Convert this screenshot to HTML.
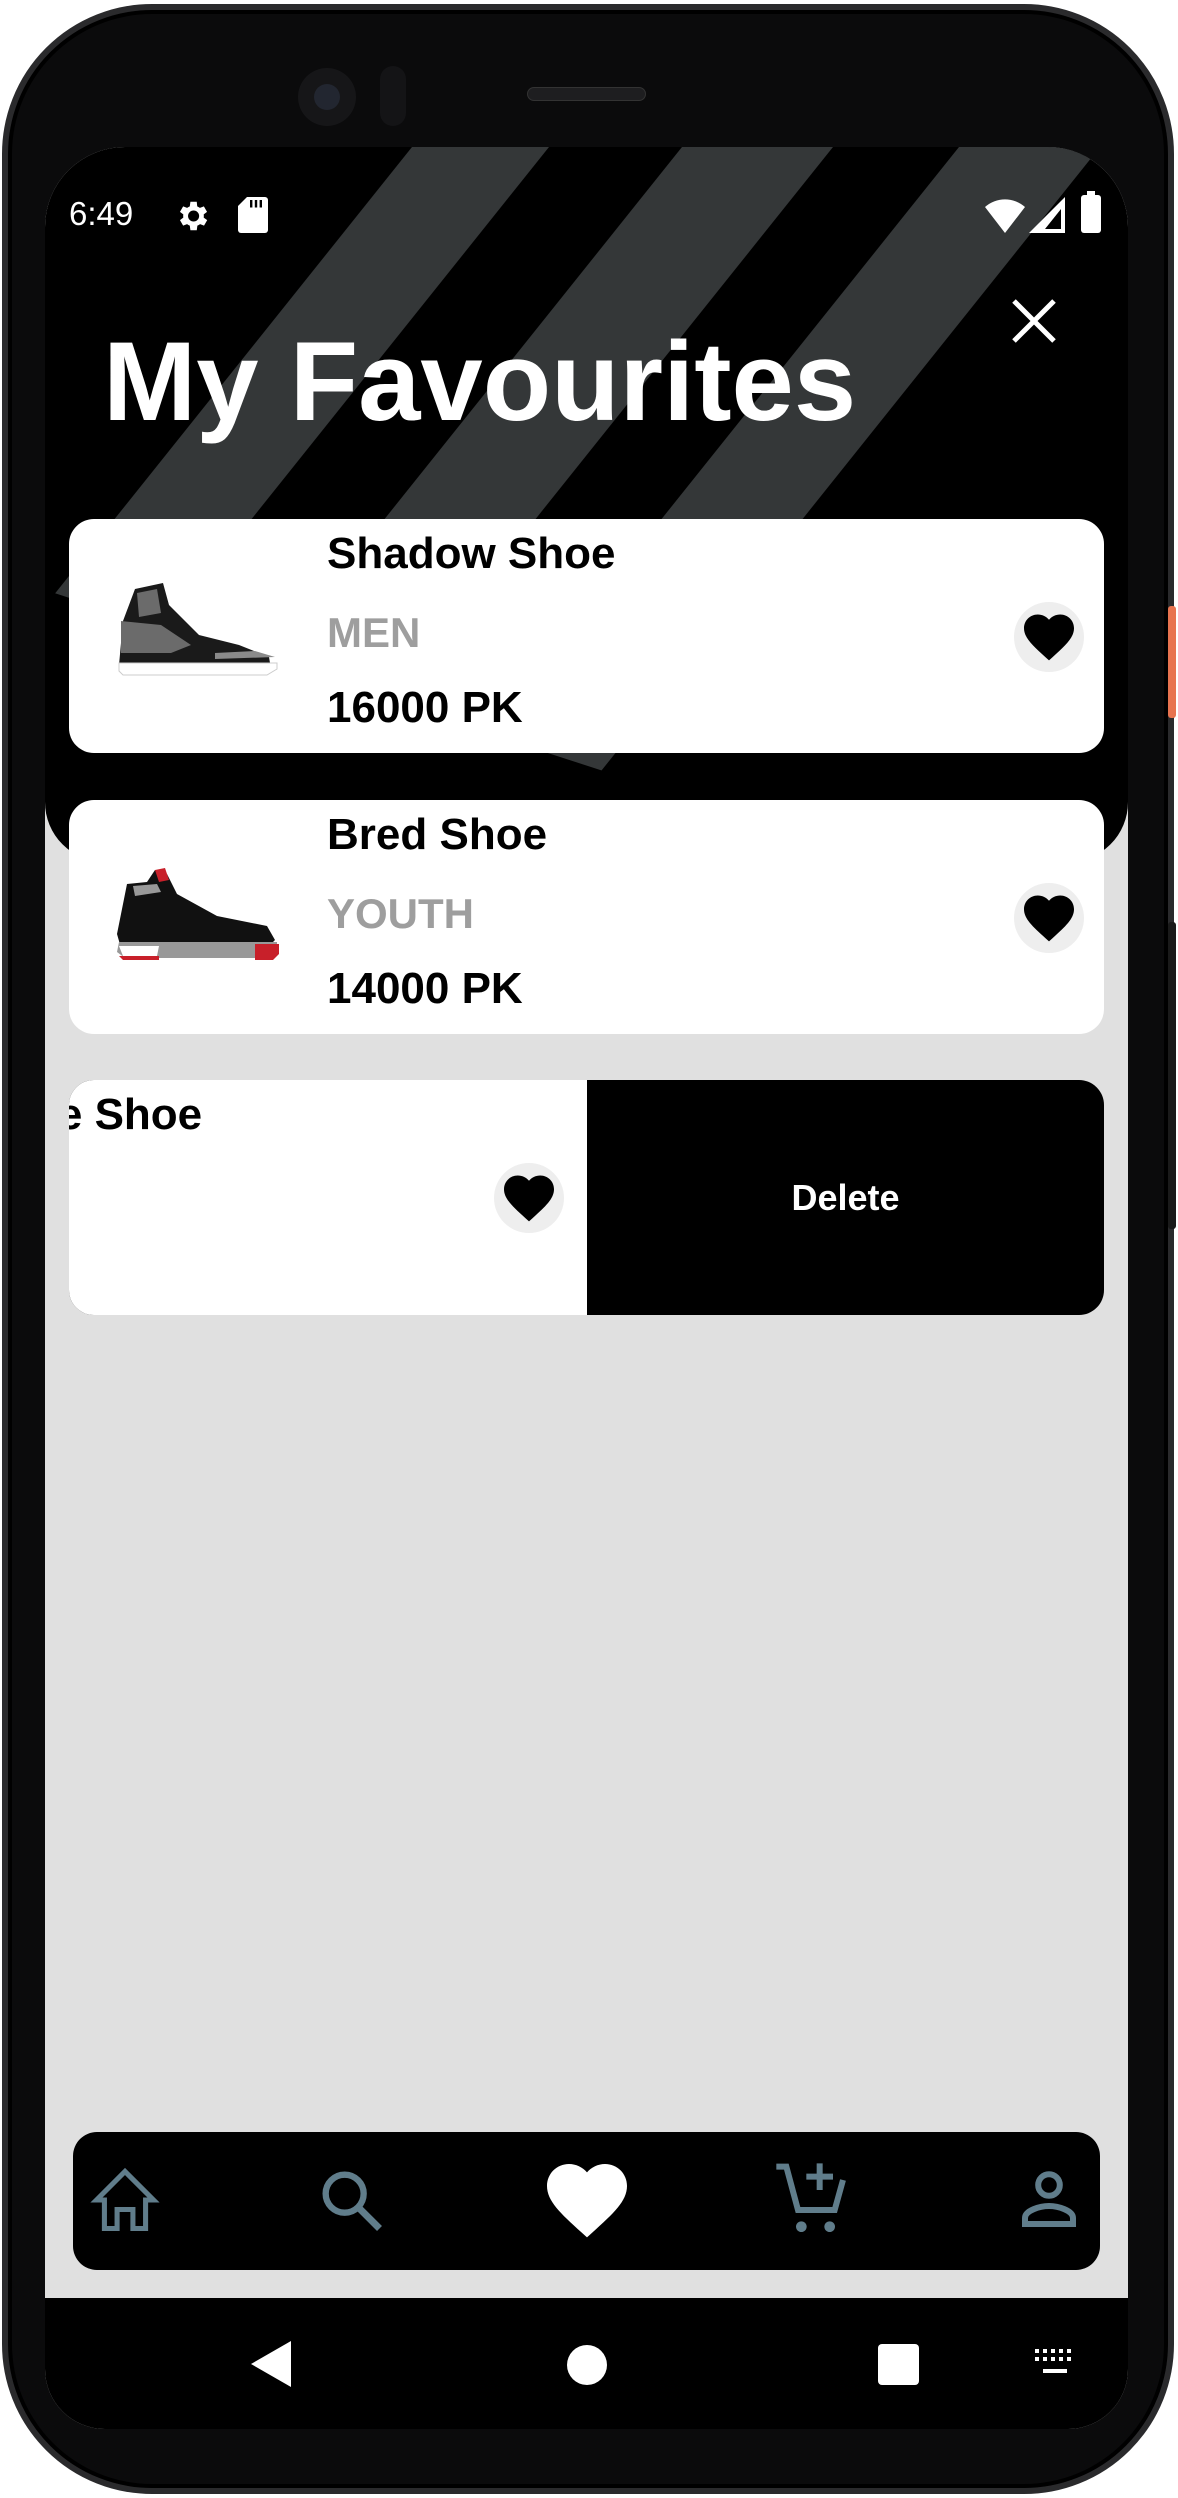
<!DOCTYPE html>
<html><head><meta charset="utf-8"><style>
*{margin:0;padding:0;box-sizing:border-box}
body{width:1178px;height:2498px;background:#fff;position:relative;overflow:hidden;font-family:"Liberation Sans",sans-serif}
.abs{position:absolute}
.phone{left:2px;top:4px;width:1172px;height:2490px;border-radius:150px;background:#0b0b0c;border:6px solid #2a2a2c;box-shadow:inset 0 0 0 4px #000}
.screen{left:45px;top:147px;width:1083px;height:2282px;border-radius:80px 80px 60px 60px;background:#e0e0e0;overflow:hidden}
.card{background:#fff;border-radius:25px}
.name{font-weight:bold;font-size:44px;color:#000}
.cat{font-weight:bold;font-size:42px;color:#9e9e9e}
.price{font-weight:bold;font-size:44px;color:#000}
.hb{width:70px;height:70px;border-radius:35px;background:#eee;display:flex;align-items:center;justify-content:center}
</style></head><body>
<div class="abs phone"></div>
<div class="abs" style="left:298px;top:68px;width:58px;height:58px;border-radius:50%;background:#161618"></div>
<div class="abs" style="left:314px;top:84px;width:26px;height:26px;border-radius:50%;background:#222630"></div>
<div class="abs" style="left:380px;top:66px;width:26px;height:60px;border-radius:13px;background:#141416"></div>
<div class="abs" style="left:527px;top:87px;width:119px;height:14px;border-radius:7px;background:#1e1e20;border:1px solid #333"></div>
<div class="abs" style="left:1168px;top:606px;width:8px;height:112px;border-radius:3px;background:#e8734f"></div>
<div class="abs" style="left:1168px;top:922px;width:8px;height:307px;border-radius:3px;background:#1a1a1a"></div>

<div class="abs screen">
  <div class="abs" style="left:0;top:0;width:1083px;height:715px;background:#000;border-radius:0 0 60px 60px;overflow:hidden">
    <svg width="1083" height="715" style="position:absolute;left:0;top:0">
      <defs><clipPath id="c"><polygon points="0,-10 1200,-10 1200,832 0,443"/></clipPath></defs>
      <g fill="#343738" transform="translate(-45,-147)">
        <g clip-path="url(#c)" transform="translate(45,147)"><g transform="translate(-45,-147)">
        <polygon points="412,147 549,147 -133,1000 -270,1000"/>
        <polygon points="682,147 833,147 151,1000 0,1000"/>
        <polygon points="959,147 1100,147 418,1000 277,1000"/>
        </g></g>
      </g>
    </svg>
  </div>
  <div class="abs" style="left:24px;top:48px;color:#fff;font-size:33px">6:49</div>
  <svg class="abs" style="left:128px;top:50px" width="38" height="38" viewBox="0 0 24 24"><path fill="#fff" d="M19.4 13a7.5 7.5 0 000-2l2.1-1.6-2-3.5-2.5 1a7 7 0 00-1.7-1L15 3h-4l-.4 2.9a7 7 0 00-1.7 1l-2.5-1-2 3.5L6.5 11a7.5 7.5 0 000 2l-2.1 1.6 2 3.5 2.5-1a7 7 0 001.7 1L11 21h4l.4-2.9a7 7 0 001.7-1l2.5 1 2-3.5zM13 15.5A3.5 3.5 0 1113 8.5a3.5 3.5 0 010 7z"/></svg>
  <svg class="abs" style="left:193px;top:50px" width="30" height="36" viewBox="0 0 10 12"><path fill="#fff" d="M3 0h6a1 1 0 011 1v10a1 1 0 01-1 1H1a1 1 0 01-1-1V3z"/><path fill="#000" d="M4 1h.8v2.5H4zM5.6 1h.8v2.5h-.8zM7.2 1H8v2.5h-.8z"/></svg>
  <svg class="abs" style="left:940px;top:50px" width="40" height="36" viewBox="0 0 20 18"><path fill="#fff" d="M10 18L0 5a15 15 0 0120 0z"/></svg>
  <svg class="abs" style="left:984px;top:50px" width="36" height="36" viewBox="0 0 18 18"><path fill="#fff" d="M18 0v18H0z"/><path fill="#000" d="M16 6v10H8z"/></svg>
  <div class="abs" style="left:1036px;top:48px;width:20px;height:38px;background:#fff;border-radius:3px"></div>
  <div class="abs" style="left:1042px;top:44px;width:8px;height:5px;background:#fff"></div>
  <svg class="abs" style="left:965px;top:150px" width="48" height="48" viewBox="0 0 48 48"><path d="M4 4L44 44M44 4L4 44" stroke="#fff" stroke-width="5"/></svg>
  <div class="abs" style="left:58px;top:170px;color:#fff;font-weight:bold;font-size:112px;line-height:130px;white-space:nowrap">My Favourites</div>

  <div class="abs card" style="left:24px;top:372px;width:1035px;height:234px">
    <svg class="abs" style="left:46px;top:62px" width="166" height="100" viewBox="0 0 166 100">
      <path d="M20 8l28-6 6 22 30 30 40 10 30 12 2 12-12 4H8l-4-8 4-44z" fill="#1a1a1a"/>
      <path d="M6 40l40 4 30 20-20 8H6z" fill="#6b6b6b"/>
      <path d="M22 12l20-4 4 24-22 4z" fill="#6b6b6b"/>
      <path d="M100 72l40-2 20 6-60 2z" fill="#8a8a8a"/>
      <path d="M4 82h158v6l-10 6H8l-4-4z" fill="#fff" stroke="#ccc"/>
    </svg>
    <div class="abs name" style="left:258px;top:10px">Shadow Shoe</div>
    <div class="abs cat" style="left:258px;top:90px">MEN</div>
    <div class="abs price" style="left:258px;top:164px">16000 PK</div>
    <div class="abs hb" style="left:945px;top:83px"><svg width="60" height="60" viewBox="0 0 24 24"><path d="M12 21.35l-1.45-1.32C5.4 15.36 2 12.28 2 8.5 2 5.42 4.42 3 7.5 3c1.74 0 3.41.81 4.5 2.09C13.09 3.81 14.76 3 16.5 3 19.58 3 22 5.42 22 8.5c0 3.78-3.4 6.86-8.55 11.54L12 21.35z"/></svg></div>
  </div>
  <div class="abs card" style="left:24px;top:653px;width:1035px;height:234px">
    <svg class="abs" style="left:46px;top:66px" width="166" height="100" viewBox="0 0 166 100">
      <path d="M12 18l20-2 8-12 12 4 10 20 40 22 50 10 8 14-8 8H6l-4-14z" fill="#111"/>
      <path d="M40 4l10-2 4 12-10 2z" fill="#c8202a"/>
      <path d="M18 20l24-2 4 8-26 4z" fill="#999"/>
      <path d="M4 76h158v8l-6 8H10l-8-6z" fill="#999"/>
      <path d="M4 80h40l-2 10H8z" fill="#fff"/>
      <path d="M4 90h40v4H8z" fill="#c8202a"/>
      <path d="M140 78h24v10l-6 6h-18z" fill="#c8202a"/>
    </svg>
    <div class="abs name" style="left:258px;top:10px">Bred Shoe</div>
    <div class="abs cat" style="left:258px;top:90px">YOUTH</div>
    <div class="abs price" style="left:258px;top:164px">14000 PK</div>
    <div class="abs hb" style="left:945px;top:83px"><svg width="60" height="60" viewBox="0 0 24 24"><path d="M12 21.35l-1.45-1.32C5.4 15.36 2 12.28 2 8.5 2 5.42 4.42 3 7.5 3c1.74 0 3.41.81 4.5 2.09C13.09 3.81 14.76 3 16.5 3 19.58 3 22 5.42 22 8.5c0 3.78-3.4 6.86-8.55 11.54L12 21.35z"/></svg></div>
  </div>
  <div class="abs" style="left:24px;top:933px;width:1035px;height:235px;border-radius:25px;overflow:hidden;background:#000">
    <div class="abs" style="left:0;top:0;width:518px;height:235px;background:#fff;overflow:hidden">
      <div class="abs name" style="left:-82px;top:10px;white-space:nowrap">Blue Shoe</div>
      <div class="abs hb" style="left:425px;top:83px"><svg width="60" height="60" viewBox="0 0 24 24"><path d="M12 21.35l-1.45-1.32C5.4 15.36 2 12.28 2 8.5 2 5.42 4.42 3 7.5 3c1.74 0 3.41.81 4.5 2.09C13.09 3.81 14.76 3 16.5 3 19.58 3 22 5.42 22 8.5c0 3.78-3.4 6.86-8.55 11.54L12 21.35z"/></svg></div>
    </div>
    <div class="abs" style="left:518px;top:0;width:517px;height:235px;display:flex;align-items:center;justify-content:center;color:#fff;font-size:36px;font-weight:bold">Delete</div>
  </div>

  <div class="abs" style="left:28px;top:1985px;width:1027px;height:138px;background:#000;border-radius:24px">
    <svg class="abs" style="left:14px;top:30px" width="76" height="76" viewBox="0 0 24 24"><path fill="none" stroke="#607d8b" stroke-width="1.6" d="M3 12L12 3l9 9h-2.5v9h-4v-6h-5v6h-4v-9z"/></svg>
    <svg class="abs" style="left:240px;top:30px" width="76" height="76" viewBox="0 0 24 24"><circle cx="10" cy="10" r="6" fill="none" stroke="#607d8b" stroke-width="2"/><path d="M14.5 14.5L21 21" stroke="#607d8b" stroke-width="2.2"/></svg>
    <svg class="abs" style="left:466px;top:20px" width="96" height="96" viewBox="0 0 24 24"><path fill="#fff" d="M12 21.35l-1.45-1.32C5.4 15.36 2 12.28 2 8.5 2 5.42 4.42 3 7.5 3c1.74 0 3.41.81 4.5 2.09C13.09 3.81 14.76 3 16.5 3 19.58 3 22 5.42 22 8.5c0 3.78-3.4 6.86-8.55 11.54L12 21.35z"/></svg>
    <svg class="abs" style="left:700px;top:28px" width="80" height="80" viewBox="0 0 24 24"><path fill="none" stroke="#607d8b" stroke-width="1.8" d="M1 2h3l3.5 13h11L21 6"/><path stroke="#607d8b" stroke-width="1.8" d="M14 1v8M10 5h8"/><circle cx="8.5" cy="20" r="1.6" fill="#607d8b"/><circle cx="17" cy="20" r="1.6" fill="#607d8b"/></svg>
    <svg class="abs" style="left:940px;top:32px" width="72" height="72" viewBox="0 0 24 24"><circle cx="12" cy="7" r="3.6" fill="none" stroke="#607d8b" stroke-width="2"/><path fill="none" stroke="#607d8b" stroke-width="2" d="M4 20v-2c0-2.5 5-4 8-4s8 1.5 8 4v2z"/></svg>
  </div>
  <div class="abs" style="left:0;top:2151px;width:1083px;height:131px;background:#000"></div>
  <svg class="abs" style="left:206px;top:2194px" width="40" height="46" viewBox="0 0 20 23"><path fill="#fff" d="M20 0v23L0 11.5z"/></svg>
  <div class="abs" style="left:522px;top:2198px;width:40px;height:40px;border-radius:50%;background:#fff"></div>
  <div class="abs" style="left:833px;top:2197px;width:41px;height:41px;border-radius:4px;background:#fff"></div>
  <svg class="abs" style="left:988px;top:2202px" width="44" height="30" viewBox="0 0 22 15"><g fill="#fff"><rect x="1" y="0" width="2" height="2"/><rect x="5" y="0" width="2" height="2"/><rect x="9" y="0" width="2" height="2"/><rect x="13" y="0" width="2" height="2"/><rect x="17" y="0" width="2" height="2"/><rect x="1" y="4" width="2" height="2"/><rect x="5" y="4" width="2" height="2"/><rect x="9" y="4" width="2" height="2"/><rect x="13" y="4" width="2" height="2"/><rect x="17" y="4" width="2" height="2"/><rect x="5" y="10" width="12" height="2"/></g></svg>
</div>
</body></html>
